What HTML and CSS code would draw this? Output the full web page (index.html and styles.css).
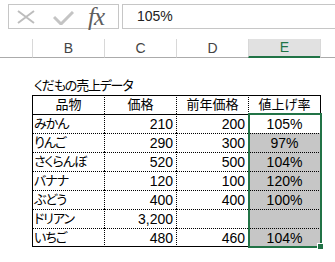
FILE: index.html
```html
<!DOCTYPE html>
<html lang="ja">
<head>
  <meta charset="UTF-8" />
  <title>くだもの売上データ</title>
  <link rel="stylesheet" href="styles.css">
</head>
<body>

  <div class="formula-bar">
    <div class="fx-box">
      <svg class="icon-cancel" width="18" height="14" viewBox="0 0 18 14">
        <path d="M1 1 L17 13 M1 13 L17 1" stroke="#bdbdbd" stroke-width="2" fill="none" />
      </svg>
      <svg class="icon-enter" width="21" height="14" viewBox="0 0 21 14">
        <path d="M1 6 L8 13 L20 1" stroke="#c4c4c4" stroke-width="3" fill="none" />
      </svg>
      <span class="fx">fx</span>
    </div>
    <div class="formula-input">105%</div>
  </div>

  <div class="col-headers">
    <div class="corner"></div>
    <div class="col-head">B</div>
    <div class="col-head">C</div>
    <div class="col-head">D</div>
    <div class="col-head active">E</div>
    <div class="col-rest"></div>
  </div>

  <div class="sheet">
    <div class="spacer"></div>
    <div class="title-row">くだもの売上データ</div>

    <div class="grid-wrap">
      <div class="fruit-table">
        <div class="head">品物</div>
        <div class="head">価格</div>
        <div class="head">前年価格</div>
        <div class="head">値上げ率</div>

        <div class="name">みかん</div>
        <div class="num">210</div>
        <div class="num">200</div>
        <div class="pct">105%</div>

        <div class="name">りんご</div>
        <div class="num">290</div>
        <div class="num">300</div>
        <div class="pct sel">97%</div>

        <div class="name">さくらんぼ</div>
        <div class="num">520</div>
        <div class="num">500</div>
        <div class="pct sel">104%</div>

        <div class="name">バナナ</div>
        <div class="num">120</div>
        <div class="num">100</div>
        <div class="pct sel">120%</div>

        <div class="name">ぶどう</div>
        <div class="num">400</div>
        <div class="num">400</div>
        <div class="pct sel">100%</div>

        <div class="name">ドリアン</div>
        <div class="num">3,200</div>
        <div class="num"></div>
        <div class="pct sel"></div>

        <div class="name">いちご</div>
        <div class="num">480</div>
        <div class="num">460</div>
        <div class="pct sel">104%</div>
      </div>

      <!-- selected range E3:E9 -->
      <div class="selection">
        <div class="fill-handle"></div>
      </div>
    </div>
  </div>

</body>
</html>
```

FILE: styles.css
```css
body {
  margin: 0;
  width: 335px;
  height: 262px;
  overflow: hidden;
  background-color: #fff;
  font-family: "Liberation Sans", "Noto Sans CJK JP", sans-serif;
  font-size: 14px;
  color: #000;
}

/* formula bar */
.formula-bar {
  display: flex;
  gap: 3px;
  padding: 4px 0 0 8px;
  height: 25px;
}

.fx-box {
  width: 111px;
  height: 25px;
  box-sizing: border-box;
  border: 1px solid #c6c6c6;
  display: flex;
  align-items: center;
}

.icon-cancel {
  margin-left: 8px;
}

.icon-enter {
  margin-left: 18px;
  margin-top: 2px;
}

.fx {
  margin-left: 14px;
  font-family: "Liberation Serif", serif;
  font-style: italic;
  font-size: 25px;
  color: #5e5e5e;
  line-height: 22px;
  letter-spacing: -1px;
}

.formula-input {
  flex: 1;
  height: 25px;
  box-sizing: border-box;
  border: 1px solid #c6c6c6;
  border-right: none;
  padding-left: 14px;
  line-height: 23px;
  color: #222;
}

/* column letters */
.col-headers {
  margin-top: 10px;
  display: grid;
  grid-template-columns: 32px 72px 72px 72px 72px 1fr;
  height: 19px;
}

.col-headers div {
  box-sizing: border-box;
  height: 19px;
  border-bottom: 1px solid #ababab;
}

.col-head {
  border-left: 1px solid #d8d8d8;
  text-align: center;
  line-height: 18px;
  color: #444;
}

.col-head.active {
  background-color: #e1e1e1;
  color: #217346;
  border-bottom: 2px solid #217346 !important;
  line-height: 17px;
}

.col-rest {
  border-left: 1px solid #d8d8d8;
}

/* sheet body */
.spacer {
  height: 18px;
}

.title-row {
  height: 19px;
  padding-left: 34px;
  font-size: 13px;
  line-height: 19px;
  font-feature-settings: "palt";
  letter-spacing: -1.2px;
}

.grid-wrap {
  position: relative;
  margin-left: 32px;
  width: 289px;
}

.fruit-table {
  display: grid;
  grid-template-columns: 72px 72px 72px 73px;
  grid-auto-rows: 19px;
}

.fruit-table div {
  box-sizing: border-box;
  border-top: 1px dotted #000;
  border-left: 1px dotted #000;
  padding: 0 3px;
  line-height: 18px;
  white-space: nowrap;
  overflow: hidden;
}

.fruit-table div:nth-child(4n+1) {
  border-left-style: solid;
}

.fruit-table div:nth-child(4n) {
  border-right: 1px solid #000;
}

.fruit-table div:nth-child(-n+8) {
  border-top-style: solid;
}

.fruit-table div:nth-last-child(-n+4) {
  border-bottom: 1px solid #000;
}

.head {
  text-align: center;
  font-size: 13px;
}

.name {
  font-size: 13px;
  font-feature-settings: "palt";
  letter-spacing: -1px;
  padding-left: 1px !important;
}

.num {
  text-align: right;
}

.pct {
  text-align: center;
}

.sel {
  background-color: #c6c6c6;
}

.selection {
  position: absolute;
  left: 216px;
  top: 18px;
  width: 74px;
  height: 135px;
  box-sizing: border-box;
  border: 2px solid #217346;
}

.fill-handle {
  position: absolute;
  right: -4px;
  bottom: -4px;
  width: 5px;
  height: 5px;
  background-color: #217346;
  border: 1px solid #fff;
}
```
